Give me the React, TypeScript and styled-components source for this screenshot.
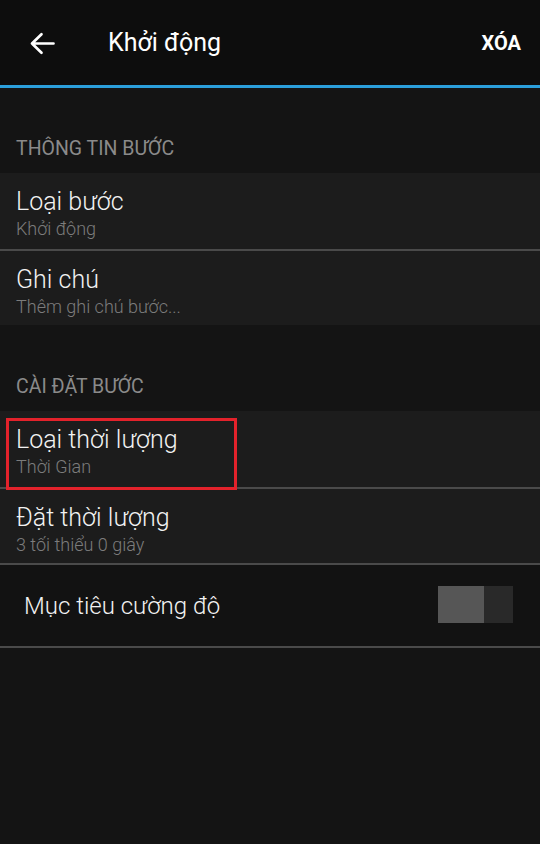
import React from 'react'
import styled, { createGlobalStyle } from 'styled-components'

const GlobalStyle = createGlobalStyle`
  html, body {
    margin: 0;
    padding: 0;
    background: #141414;
    font-family: Roboto, "Noto Sans", sans-serif;
  }
  #root {
    min-height: 844px;
    background: #141414;
  }
`

type Item = {
  title: string
  sub: string
  marked?: boolean
}

const stepInfo: Item[] = [
  { title: 'Loại bước', sub: 'Khởi động' },
  { title: 'Ghi chú', sub: 'Thêm ghi chú bước...' },
]

const stepSettings: Item[] = [
  { title: 'Loại thời lượng', sub: 'Thời Gian', marked: true },
  { title: 'Đặt thời lượng', sub: '3 tối thiểu 0 giây' },
]

function BackArrow() {
  return (
    <svg width='26' height='23' viewBox='0 0 26 23'>
      <path d='M24.5 11.5H3M12.5 2.2L3 11.5l9.5 9.3' fill='none' stroke='#fff' strokeWidth='2.7' strokeLinecap='round' strokeLinejoin='round' />
    </svg>
  )
}

export default function App() {
  return (
    <Page>
      <GlobalStyle />
      <TopBar>
        <BackBtn><BackArrow /></BackBtn>
        <Title>Khởi động</Title>
        <Action>XÓA</Action>
      </TopBar>

      <SectionHead>THÔNG TIN BƯỚC</SectionHead>
      <List>
        {stepInfo.map(item => (
          <Row key={item.title}>
            <RowTitle>{item.title}</RowTitle>
            <RowSub>{item.sub}</RowSub>
          </Row>
        ))}
      </List>

      <SectionHead $tall>CÀI ĐẶT BƯỚC</SectionHead>
      <List>
        {stepSettings.map(item => (
          <Row key={item.title}>
            {item.marked && <Marker />}
            <RowTitle>{item.title}</RowTitle>
            <RowSub>{item.sub}</RowSub>
          </Row>
        ))}
      </List>

      <ToggleRow>
        <ToggleLabel>Mục tiêu cường độ</ToggleLabel>
        <Toggle>
          <Thumb />
        </Toggle>
      </ToggleRow>
    </Page>
  )
}

const Page = styled.div`
  width: 540px;
  min-height: 844px;
  background: #141414;
  color: #fff;
`

const TopBar = styled.div`
  display: flex;
  align-items: center;
  height: 85px;
  background: #0d0d0d;
  border-bottom: 3px solid #2b9fdb;
`

const BackBtn = styled.div`
  display: flex;
  align-items: center;
  justify-content: center;
  width: 56px;
  margin-left: 14px;
  margin-top: 2px;
`

const Title = styled.div`
  flex: 1;
  margin-left: 38px;
  font-size: 25px;
  color: #fff;
`

const Action = styled.div`
  font-size: 20px;
  font-weight: 700;
  margin-right: 19px;
`

const SectionHead = styled.div<{ $tall?: boolean }>`
  height: ${p => (p.$tall ? 86 : 85)}px;
  box-sizing: border-box;
  padding: ${p => (p.$tall ? 51 : 50)}px 16px 0;
  font-size: 19.5px;
  color: #8a8a8a;
  line-height: 22px;
`

const List = styled.div`
  background: #1c1c1c;
  & > div + div {
    border-top: 2px solid #4a4a4a;
  }
`

const Row = styled.div`
  position: relative;
  height: 76px;
  box-sizing: border-box;
  padding: 14px 16px 0;
`

const RowTitle = styled.div`
  font-size: 25px;
  font-weight: 300;
  line-height: 30px;
  color: #f2f2f2;
`

const RowSub = styled.div`
  font-size: 18px;
  line-height: 24px;
  font-weight: 300;
  color: #7c7c7c;
`

const Marker = styled.div`
  position: absolute;
  z-index: 1;
  left: 6px;
  top: 7px;
  width: 231px;
  height: 72px;
  box-sizing: border-box;
  border: 3px solid #e3222b;
`

const ToggleRow = styled.div`
  display: flex;
  align-items: center;
  justify-content: space-between;
  height: 81px;
  padding: 0 27px 0 24px;
  background: #121212;
  border-top: 2px solid #4a4a4a;
  border-bottom: 2px solid #4a4a4a;
`

const ToggleLabel = styled.div`
  font-size: 24px;
  font-weight: 300;
  color: #f2f2f2;
`

const Toggle = styled.div`
  display: flex;
  width: 75px;
  height: 37px;
  margin-top: -2px;
  background: #292929;
`

const Thumb = styled.div`
  width: 46px;
  height: 100%;
  background: #565656;
`
